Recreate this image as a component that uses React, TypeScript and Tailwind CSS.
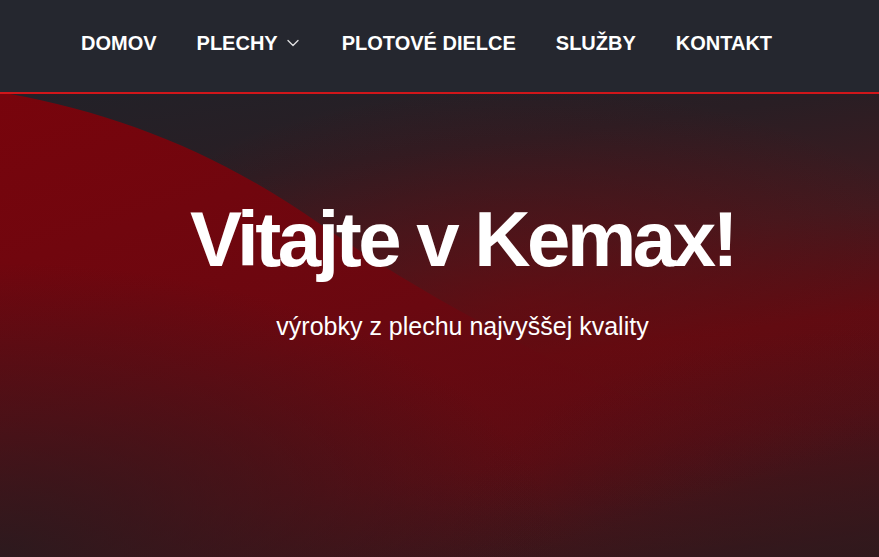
import { ChevronDown } from "lucide-react";

const links = [
  { label: "DOMOV" },
  { label: "PLECHY", menu: true },
  { label: "PLOTOVÉ DIELCE" },
  { label: "SLUŽBY" },
  { label: "KONTAKT" },
];

export default function App() {
  return (
    <div className="min-h-screen bg-[#24222a] font-['Liberation_Sans',Arial,sans-serif]">
      <header className="h-[94px] bg-[#25272f] border-b-2 border-[#d0161a] flex items-center pl-[81px] pb-[7px]">
        <nav className="flex items-center gap-[40px]">
          {links.map((l) => (
            <a
              key={l.label}
              href="#"
              className="flex items-center text-white font-bold text-[20px]"
            >
              {l.label}
              {l.menu && (
                <ChevronDown className="ml-[5px] -mr-[1px] size-[20px] text-white/85" strokeWidth={1.6} />
              )}
            </a>
          ))}
        </nav>
      </header>

      <section className="relative h-[463px] overflow-hidden bg-[linear-gradient(172deg,#222128_0%,#291e24_20%,#401a1f_40%,#5e0c12_58%,#560e15_75%,#3c161b_92%,#2c1a1e_100%)]">
        <div className="absolute inset-0 bg-[radial-gradient(ellipse_at_60%_45%,rgba(110,8,14,0.55)_0%,rgba(110,8,14,0)_60%)]" />
        <svg
          className="absolute inset-0 w-full h-full"
          viewBox="0 0 879 463"
          preserveAspectRatio="none"
        >
          <defs>
            <linearGradient id="wave" x1="0" y1="0" x2="0.6" y2="1">
              <stop offset="0" stopColor="#78040c" />
              <stop offset="0.55" stopColor="#6a0810" />
              <stop offset="1" stopColor="#5a0c13" stopOpacity="0" />
            </linearGradient>
          </defs>
          <path
            d="M0 0 L10 0 C120 20 220 60 320 130 C420 200 520 250 620 300 L879 330 L879 463 L0 463 Z"
            fill="url(#wave)"
          />
        </svg>
        <div className="absolute inset-0 bg-[radial-gradient(ellipse_at_0%_100%,rgba(36,28,32,0.85)_0%,rgba(36,28,32,0)_45%)]" />
        <div className="absolute inset-0 bg-[radial-gradient(ellipse_at_100%_100%,rgba(50,24,28,0.6)_0%,rgba(50,24,28,0)_35%)]" />

        <div className="relative flex flex-col items-center pl-[46px] pt-[106px] text-white">
          <h1 className="font-bold text-[78px] leading-none tracking-[-0.045em]">
            Vitajte v Kemax!
          </h1>
          <p className="mt-[36px] text-[25px] leading-none">
            výrobky z plechu najvyššej kvality
          </p>
        </div>
      </section>
    </div>
  );
}
